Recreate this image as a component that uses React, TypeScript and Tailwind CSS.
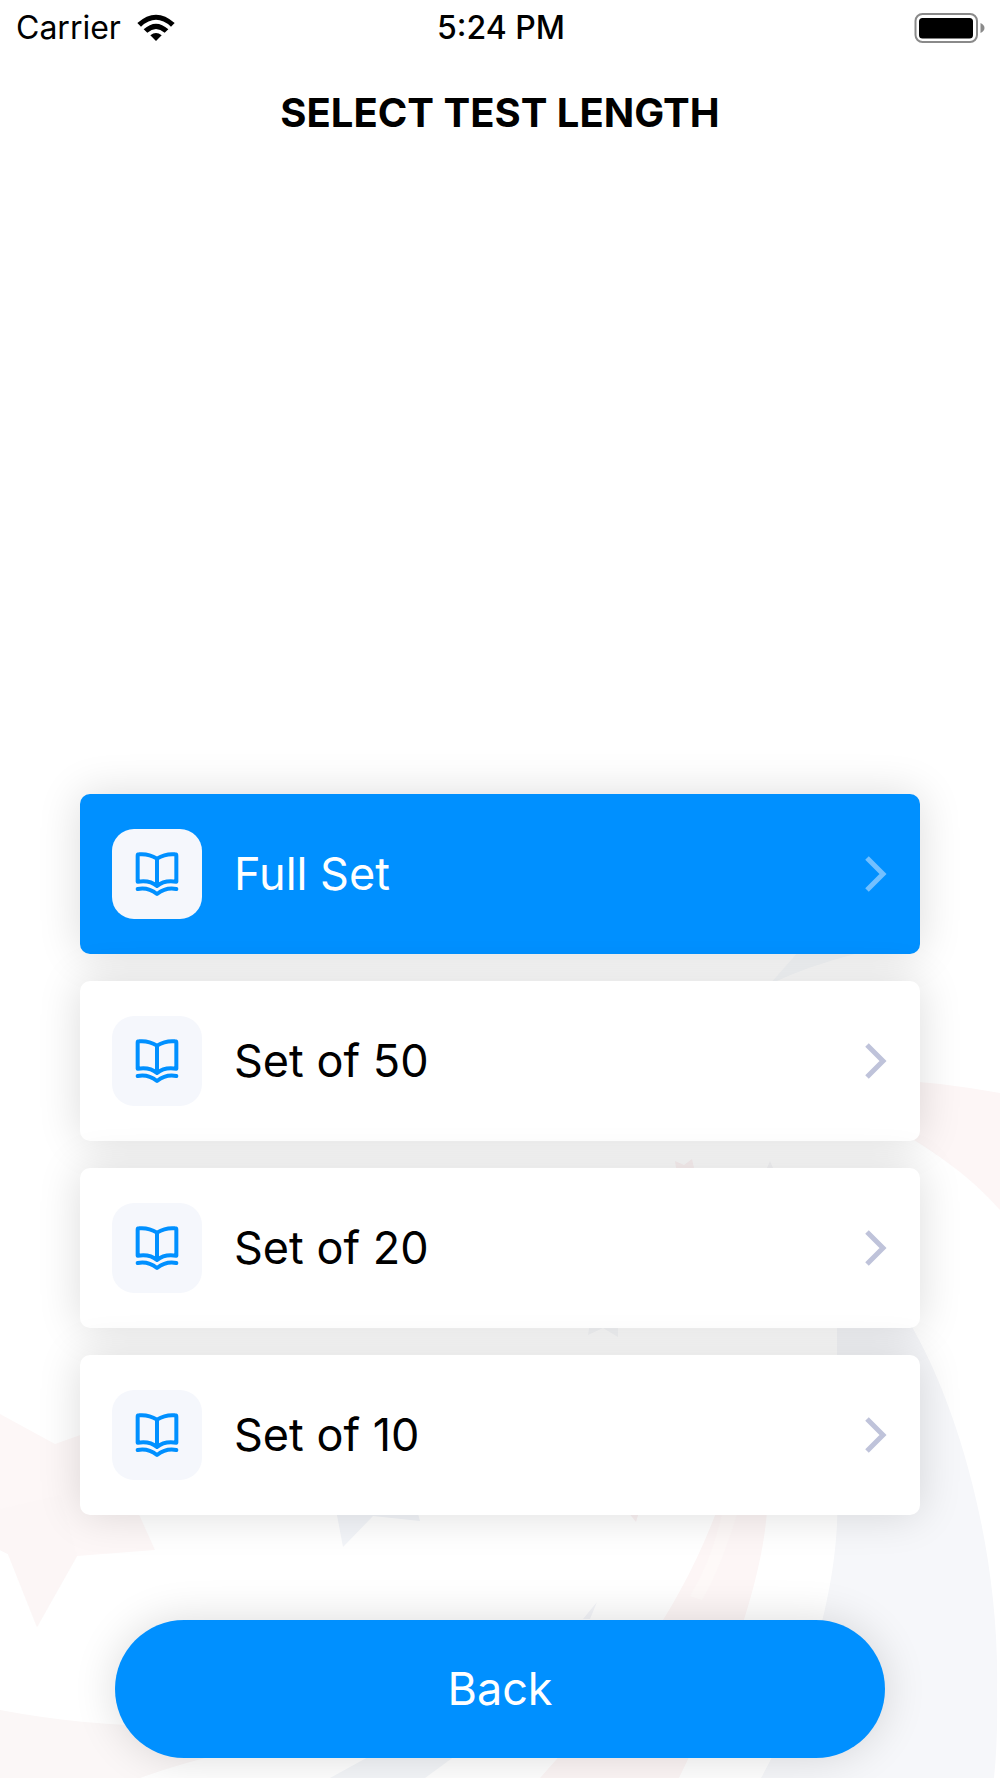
function Backdrop() {
  return (
    <svg
      className="pointer-events-none absolute inset-0 h-full w-full"
      viewBox="0 0 1000 1778"
      preserveAspectRatio="xMidYMax slice"
      aria-hidden="true"
    >
      <path d="M770 984 Q808 966 855 954 L800 950 Z" fill="#f8fafc" />
      <path d="M870 1078 Q940 1082 1000 1093 V1210 C970 1176 940 1156 895 1128 Z" fill="#fdf6f6" />
      <path d="M676 1168 L675 1161 L684 1165 L692 1159 L694 1168 Z" fill="#fdf4f5" />
      <path d="M767 1168 L770 1161 L773 1168 Z" fill="#f7f7f9" />
      <path d="M590 1322 L588 1335 L603 1328 L618 1337 L618 1322 Z" fill="#f7f8fa" />
      <path d="M837 1320 H908 C962 1410 1000 1560 997 1690 Q998 1740 994 1778 H761 C800 1710 842 1590 837 1490 Z" fill="#f6f7fa" />
      <path d="M717 1510 H767 C764 1560 742 1650 679 1778 H540 C620 1690 680 1610 717 1510 Z" fill="#fdf6f6" />
      <path d="M722 1514 H737 Q720 1570 702 1600 L690 1596 Q712 1560 722 1514 Z" fill="#fef9f8" />
      <path d="M628 1512 L636 1522 L639 1512 Z" fill="#fbf3f4" />
      <path d="M583 1619 L597 1602 L590 1619 Z" fill="#f4f5f9" />
      <path d="M336 1510 L343 1547 L373 1516 L420 1521 L417 1510 Z" fill="#f3f5f9" />
      <path d="M0 1414 L55 1444 L100 1428 L155 1550 L77 1556 L37 1627 L8 1554 L0 1550 Z" fill="#fdf7f7" />
      <path d="M0 1509 L60 1495 L77 1556 L37 1627 L8 1554 L0 1550 Z" fill="#fcf6f6" />
      <path d="M0 1710 Q90 1727 180 1726 L240 1750 Q190 1760 140 1778 H0 Z" fill="#fbf7f7" />
      <path d="M390 1745 H470 L425 1778 H330 Z" fill="#f4f6f9" />
    </svg>
  );
}

function WifiIcon() {
  return (
    <svg className="h-7 w-[38px]" viewBox="0 0 114 84" aria-hidden="true">
      <path d="M1 27 Q57 -23 113 27 L102 38 Q57 -3 12 38 Z" />
      <path d="M20 46 Q57 12 94 46 L83 56 Q57 34 31 56 Z" />
      <path d="M40 64 Q57 50 74 64 L57 81 Z" />
    </svg>
  );
}

function BatteryIcon() {
  return (
    <svg className="h-8 w-[72px]" viewBox="0 0 72 32" role="img" aria-label="Battery full">
      <rect x="1.5" y="2" width="61.5" height="28" rx="7" fill="none" stroke="#8a8a8a" strokeWidth="2" />
      <rect x="5" y="6" width="54" height="20.500" rx="3.500" />
      <path d="M66.500 11 Q70.500 13 70.500 16 Q70.500 19 66.500 21 Z" fill="#8a8a8a" />
    </svg>
  );
}

function BookIcon() {
  return (
    <svg
      className="h-12 w-12"
      viewBox="0 0 144 144"
      fill="none"
      stroke="#0090ff"
      strokeWidth="12"
      strokeLinecap="round"
      strokeLinejoin="round"
      aria-hidden="true"
    >
      <path d="M72 26 Q46 10 18 13 Q14 13 14 17 V95 Q50 89 72 108 Q94 89 130 95 V17 Q130 13 126 13 Q98 10 72 26 Z" />
      <path d="M72 26 V106" />
      <path d="M14 117 C32 113 50 115 72 132 C94 115 112 113 130 117" />
    </svg>
  );
}

function Chevron({ color }: { color: string }) {
  return (
    <svg className={`h-9 w-6 ${color}`} viewBox="0 0 24 36" fill="none" stroke="currentColor" strokeWidth="5" aria-hidden="true">
      <path d="M3 2 L19 18 L3 34" />
    </svg>
  );
}

const options = [
  { label: "Full Set", active: true },
  { label: "Set of 50", active: false },
  { label: "Set of 20", active: false },
  { label: "Set of 10", active: false },
];

export default function App() {
  return (
    <div className="relative flex min-h-screen flex-col overflow-hidden bg-white font-['Inter',sans-serif] text-black">
      <Backdrop />
      <header className="relative">
        <div className="grid grid-cols-3 items-center pt-2 pr-3.5 pl-4 text-[32px] leading-10">
          <div className="flex items-center gap-4">
            <span>Carrier</span>
            <WifiIcon />
          </div>
          <time className="text-center font-medium">5:24 PM</time>
          <div className="flex justify-end">
            <BatteryIcon />
          </div>
        </div>
        <h1 className="mt-10 text-center text-[40px] leading-[50px] font-bold">SELECT TEST LENGTH</h1>
      </header>
      <main className="relative mt-auto px-20 pb-5">
        <div className="flex flex-col gap-[27px]">
          {options.map(({ label, active }) => (
            <button
              key={label}
              type="button"
              className={`flex h-40 items-center rounded-[10px] px-8 text-left text-[45px] shadow-[0_0_44px_rgba(0,0,0,0.14)] ${
                active ? "bg-[#0090ff] text-white" : "bg-white text-black"
              }`}
            >
              <span className="flex size-[90px] items-center justify-center rounded-[22px] bg-[#f5f7fc]">
                <BookIcon />
              </span>
              <span className="ml-8 flex-1">{label}</span>
              <Chevron color={active ? "text-[#73c0ff]" : "text-[#bfc3da]"} />
            </button>
          ))}
        </div>
        <div className="mt-[105px] px-[35px]">
          <button
            type="button"
            className="h-[138px] w-full rounded-full bg-[#0090ff] text-[45px] text-white shadow-[0_0_44px_rgba(0,0,0,0.14)]"
          >
            Back
          </button>
        </div>
      </main>
    </div>
  );
}
